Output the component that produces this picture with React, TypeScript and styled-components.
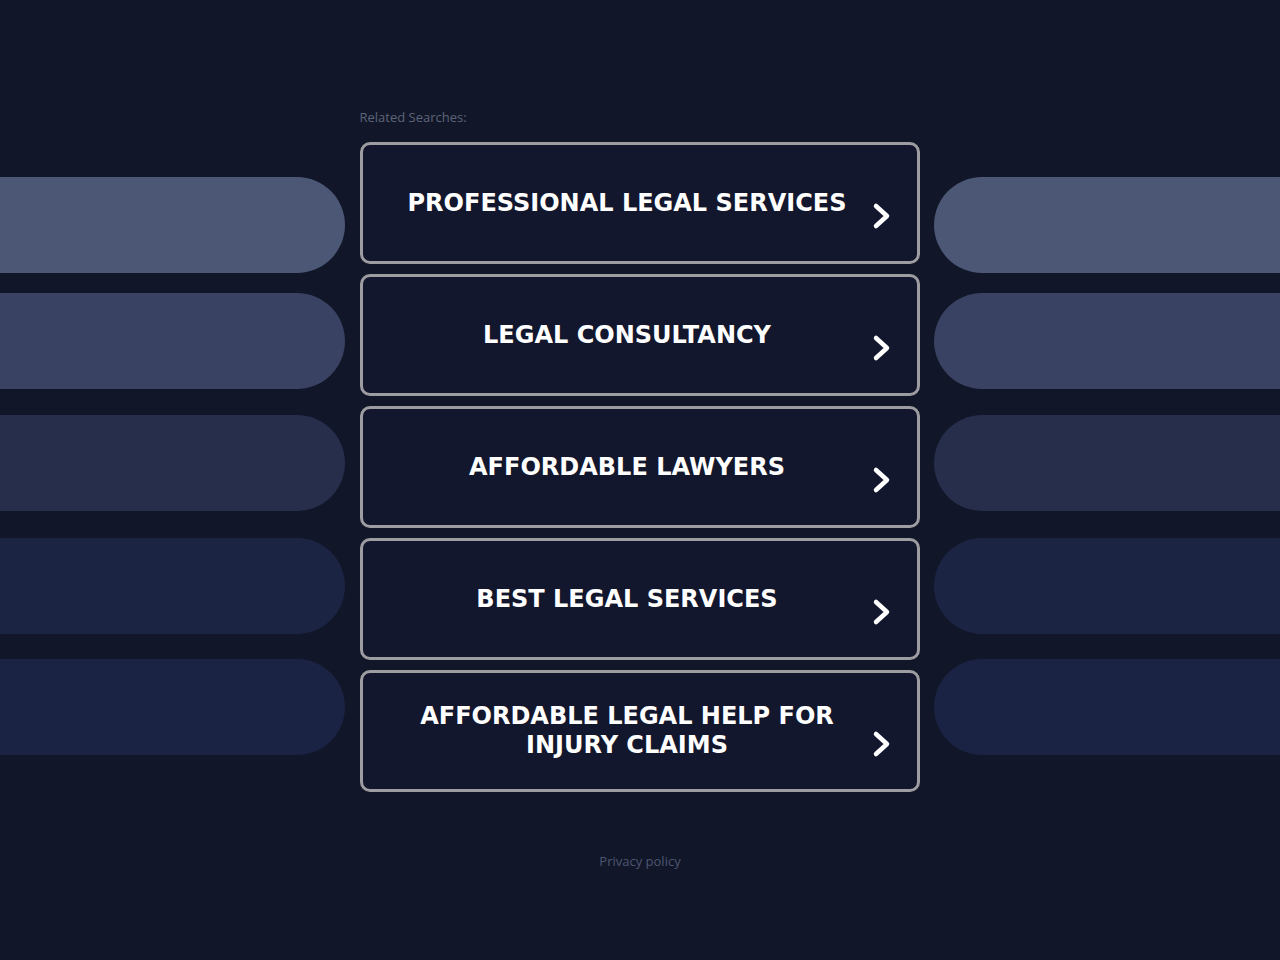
import styled, { createGlobalStyle } from "styled-components";

const GlobalStyle = createGlobalStyle`
  html, body {
    margin: 0;
    padding: 0;
    background-color: #111729;
  }
  body {
    font-family: "DejaVu Sans", "Liberation Sans", sans-serif;
  }
`;

const Page = styled.div`
  width: 1280px;
  min-height: 960px;
  display: grid;
  grid-template-columns: 345px 560px 346px;
  grid-template-rows: auto auto;
  justify-content: space-between;
  align-content: start;
`;

const Side = styled.div`
  display: flex;
  flex-direction: column;
  padding-top: 177px;
`;

const Bar = styled.div<{ $side: "left" | "right"; $tone: string; $gap: number }>`
  height: 96px;
  margin-top: ${(p) => p.$gap}px;
  background-color: ${(p) => p.$tone};
  border-radius: ${(p) => (p.$side === "left" ? "0 48px 48px 0" : "48px 0 0 48px")};
`;

const Center = styled.main`
  display: flex;
  flex-direction: column;
  padding-top: 110px;
`;

const Caption = styled.div`
  font-family: "Open Sans", "Noto Sans", sans-serif;
  font-size: 13px;
  line-height: 15px;
  color: #5d6478;
  margin-bottom: 17px;
`;

const List = styled.div`
  display: flex;
  flex-direction: column;
  gap: 10px;
`;

const LinkButton = styled.a`
  box-sizing: border-box;
  height: 122px;
  display: flex;
  align-items: center;
  padding: 0 25px 0 20px;
  border: 3px solid #9c9ca1;
  border-radius: 10px;
  background-color: #12172d;
  color: #ffffff;
  text-decoration: none;
  cursor: pointer;
`;

const Label = styled.span`
  flex: 1;
  text-align: center;
  font-family: "DejaVu Sans", sans-serif;
  font-weight: bold;
  font-size: 24px;
  line-height: 29px;
  letter-spacing: 0;
  text-transform: uppercase;
`;

const Chevron = styled.svg`
  width: 20px;
  height: 28px;
  margin-top: 26px;
  flex-shrink: 0;
`;

const Footer = styled.div`
  grid-column: 1 / -1;
  text-align: center;
  padding-top: 62px;
  font-family: "Open Sans", "Noto Sans", sans-serif;
  font-size: 13px;
  line-height: 15px;
  color: #4e5570;
`;

const bars = [
  { tone: "#4c5775", gap: 0 },
  { tone: "#394262", gap: 20 },
  { tone: "#262e4c", gap: 26 },
  { tone: "#1c2443", gap: 27 },
  { tone: "#1b2344", gap: 25 },
];

const searches = [
  "Professional Legal Services",
  "Legal Consultancy",
  "Affordable Lawyers",
  "Best Legal Services",
  "Affordable Legal Help for Injury Claims",
];

const SideBars = ({ side }: { side: "left" | "right" }) => (
  <Side>
    {bars.map((b, i) => (
      <Bar key={i} $side={side} $tone={b.tone} $gap={b.gap} />
    ))}
  </Side>
);

export default function App() {
  return (
    <>
      <GlobalStyle />
      <Page>
        <SideBars side="left" />
        <Center>
          <Caption>Related Searches:</Caption>
          <List>
            {searches.map((s) => (
              <LinkButton key={s}>
                <Label>{s}</Label>
                <Chevron viewBox="0 0 20 28">
                  <path
                    d="M4 4 L15 14 L4 24"
                    fill="none"
                    stroke="#ffffff"
                    strokeWidth="4.5"
                    strokeLinecap="round"
                    strokeLinejoin="round"
                  />
                </Chevron>
              </LinkButton>
            ))}
          </List>
        </Center>
        <SideBars side="right" />
        <Footer>Privacy policy</Footer>
      </Page>
    </>
  );
}
